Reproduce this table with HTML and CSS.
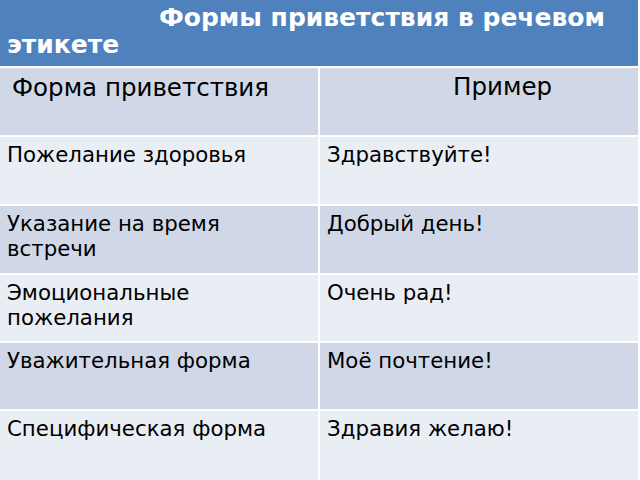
FILE: index.html
```html
<!DOCTYPE html>
<html lang="ru">
<head>
<meta charset="utf-8">
<title>Формы приветствия в речевом этикете</title>
<link rel="stylesheet" href="styles.css">
</head>
<body>
<div class="table">
  <div class="title"><span class="title-indent"></span>Формы приветствия в речевом этикете</div>
  <div class="cell dark head-left">Форма приветствия</div>
  <div class="cell dark head-right">Пример</div>
  <div class="cell light">Пожелание здоровья</div>
  <div class="cell light">Здравствуйте!</div>
  <div class="cell dark">Указание на время встречи</div>
  <div class="cell dark">Добрый день!</div>
  <div class="cell light">Эмоциональные пожелания</div>
  <div class="cell light">Очень рад!</div>
  <div class="cell dark">Уважительная форма</div>
  <div class="cell dark">Моё почтение!</div>
  <div class="cell light">Специфическая форма</div>
  <div class="cell light">Здравия желаю!</div>
</div>
</body>
</html>
```
FILE: styles.css
```css
html, body {
  margin: 0;
  padding: 0;
  background: #ffffff;
  overflow: hidden;
}
body {
  width: 640px;
  height: 480px;
  font-family: "DejaVu Sans", sans-serif;
  color: #000;
}
.table {
  display: grid;
  grid-template-columns: 318px 318px;
  grid-template-rows: 66px 67px 67px 67px 66px 66px 80px;
  gap: 2px;
  width: 638px;
}
.title {
  grid-column: 1 / span 2;
  background: #4f81bd;
  color: #fff;
  font-weight: bold;
  font-size: 25px;
  line-height: 27px;
  padding: 4px 0 0 7px;
  box-sizing: border-box;
}
.title-indent {
  display: inline-block;
  width: 152px;
}
.cell {
  font-size: 21.3px;
  line-height: 25px;
  padding: 5px 7px 0 7px;
  box-sizing: border-box;
}
.dark { background: #d0d8e8; }
.light { background: #e9edf4; }
.head-left {
  font-size: 24.5px;
  line-height: 28px;
  padding-left: 12px;
  padding-top: 6px;
}
.head-right {
  font-size: 24.5px;
  line-height: 28px;
  padding-left: 133px;
  padding-top: 5px;
}
```
